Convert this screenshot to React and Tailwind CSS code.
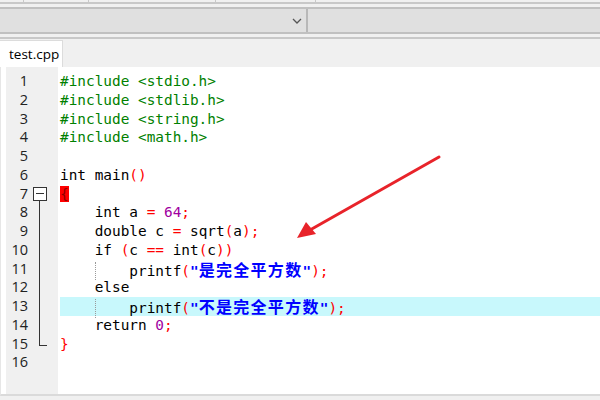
import React from "react";

const G = ({ children }) => <span className="text-[#008000]">{children}</span>;
const R = ({ children }) => <span className="text-[#ff0000]">{children}</span>;
const P = ({ children }) => <span className="text-[#a000a0]">{children}</span>;
const S = ({ children }) => (
  <span className="text-[#0000ff] font-bold">
    "
    <span className="text-[16px] tracking-[1.3px] font-bold [font-family:'Noto_Sans_CJK_SC',sans-serif]">
      {children}
    </span>
    "
  </span>
);

const Guide = () => (
  <span className="inline-block w-[34.7px]">
    <span className="inline-block h-[18.75px] align-top border-l border-dotted border-[#9a9a9a]" />
  </span>
);

const lines = [
  <G>#include &lt;stdio.h&gt;</G>,
  <G>#include &lt;stdlib.h&gt;</G>,
  <G>#include &lt;string.h&gt;</G>,
  <G>#include &lt;math.h&gt;</G>,
  null,
  <>int main<R>()</R></>,
  <span className="bg-[#ff0000] text-[#900000]">{"{"}</span>,
  <>{"    "}int a <R>=</R> <P>64</P><R>;</R></>,
  <>{"    "}double c <R>=</R> sqrt<R>(</R>a<R>);</R></>,
  <>{"    "}if <R>(</R>c <R>==</R> int<R>(</R>c<R>))</R></>,
  <>{"    "}<Guide />printf<R>(</R><S>是完全平方数</S><R>);</R></>,
  <>{"    "}else</>,
  <>{"    "}<Guide />printf<R>(</R><S>不是完全平方数</S><R>);</R></>,
  <>{"    "}return <P>0</P><R>;</R></>,
  <R>{"}"}</R>,
  null,
];

const Fold = ({ n }) => {
  if (n === 7)
    return (
      <div className="relative w-full h-full">
        <div className="absolute left-[5px] top-[2px] w-[14px] h-[14px] border border-[#333] bg-white flex items-center justify-center">
          <div className="w-[8px] h-px bg-[#333]" />
        </div>
        <div className="absolute left-[11px] top-[16px] bottom-0 w-px bg-[#333]" />
      </div>
    );
  if (n > 7 && n < 15)
    return (
      <div className="relative w-full h-full">
        <div className="absolute left-[11px] top-0 bottom-0 w-px bg-[#333]" />
      </div>
    );
  if (n === 15)
    return (
      <div className="relative w-full h-full">
        <div className="absolute left-[11px] top-0 h-[10px] w-px bg-[#333]" />
        <div className="absolute left-[11px] top-[10px] w-[8px] h-px bg-[#333]" />
      </div>
    );
  return null;
};

export default function App() {
  return (
    <div className="w-[600px] h-[400px] overflow-hidden bg-[#f0f0f0] flex flex-col relative">
      {/* top strip */}
      <div className="h-[2px] flex">
        <div className="w-px h-full bg-[#c8c8c8] ml-[23px]" />
        <div className="w-px h-full bg-[#c8c8c8] ml-[64px]" />
        <div className="w-px h-full bg-[#c8c8c8] ml-[126px]" />
        <div className="w-px h-full bg-[#c8c8c8] ml-[99px]" />
      </div>
      <div className="h-[2px] bg-[#c8c8c8]" />
      <div className="h-[3px] bg-[#f0f0f0]" />
      <div className="h-[27px] bg-[#e0e0e0] border-y-2 border-[#c0c0c0] flex">
        <div className="w-[306px] flex items-center justify-end pr-[4px]">
          <svg width="10" height="6" viewBox="0 0 10 6">
            <path d="M1 1 L5 5 L9 1" fill="none" stroke="#555" strokeWidth="1.3" />
          </svg>
        </div>
        <div className="w-[2px] bg-[#b8b8b8]" />
        <div className="flex-1" />
      </div>
      <div className="h-[3px]" />
      <div className="h-[2px] bg-[#c8c8c8]" />
      {/* tab bar */}
      <div className="h-[28px] flex items-end">
        <div className="w-[63px] h-[27px] bg-white border-t border-r border-[#dcdcdc] flex items-center pl-[9px] text-[13.5px] text-black [font-family:'Open_Sans',sans-serif]">
          test.cpp
        </div>
      </div>
      {/* editor */}
      <div className="flex-1 flex bg-white border-b-2 border-[#dadada] mb-[4px] border-l border-l-[#e6e6e6] pl-[5px]">
        <div className="w-[52px] bg-[#f0f0f0] pt-[5px] flex flex-col">
          {lines.map((_, i) => (
            <div key={i} className="h-[18.75px] flex">
              <div className="w-[22px] text-right text-[14.5px] leading-[18.75px] text-[#222] [font-family:'Open_Sans',sans-serif]">
                {i + 1}
              </div>
              <div className="w-[30px] h-full">
                <Fold n={i + 1} />
              </div>
            </div>
          ))}
        </div>
        <div className="flex-1 pt-[5px] pl-[2px] whitespace-pre text-[14.4px] text-black [font-family:'DejaVu_Sans_Mono',monospace]">
          {lines.map((l, i) => (
            <div
              key={i}
              className={`h-[18.75px] leading-[18.75px] ${i === 12 ? "bg-[#c8f8fc]" : ""}`}
            >
              {l}
            </div>
          ))}
        </div>
      </div>
      {/* arrow annotation */}
      <svg className="absolute left-0 top-0" width="600" height="400" viewBox="0 0 600 400">
        <line x1="439" y1="157" x2="310" y2="230" stroke="#e8232a" strokeWidth="3" strokeLinecap="round" />
        <polygon points="297,238 306,222 316,234" fill="#e8232a" />
      </svg>
    </div>
  );
}
